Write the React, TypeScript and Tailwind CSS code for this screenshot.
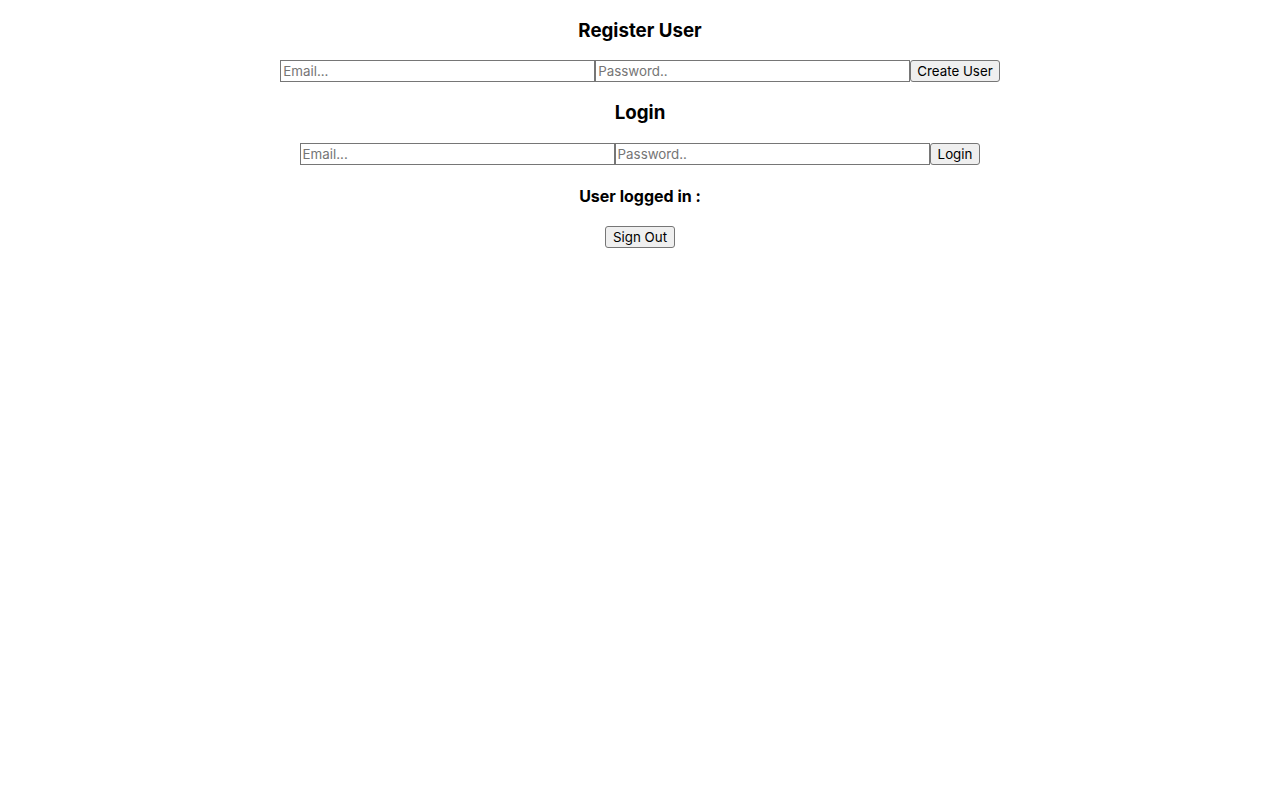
import React from "react";

const inputCls =
  "w-[315px] h-[22px] border border-[#767676] bg-white px-[2px] py-[1px] text-[13.333px] leading-[normal] text-black placeholder:text-[#757575] outline-none";
const btnCls =
  "h-[22px] border border-[#767676] rounded-[3px] bg-[#efefef] py-[1px] text-[13.333px] text-black leading-[normal]";

export default function App() {
  return (
    <div className="min-h-[800px] bg-white text-center text-black leading-[normal] font-['Inter','Noto_Sans',sans-serif]">
      <div className="flow-root">
        <h3 className="my-[18.72px] text-[18.72px] font-bold">Register User</h3>
        <div className="flex justify-center">
          <input className={inputCls} placeholder="Email..." />
          <input className={inputCls} placeholder="Password.." type="password" />
          <button className={`${btnCls} px-[6px]`}>Create User</button>
        </div>
        <h3 className="my-[18.72px] text-[18.72px] font-bold">Login</h3>
        <div className="flex justify-center">
          <input className={inputCls} placeholder="Email..." />
          <input className={inputCls} placeholder="Password.." type="password" />
          <button className={`${btnCls} px-[7px]`}>Login</button>
        </div>
        <h4 className="my-[20.8px] text-[16px] font-bold">User logged in : </h4>
        <div className="flex justify-center">
          <button className={`${btnCls} px-[7px]`}>Sign Out</button>
        </div>
      </div>
    </div>
  );
}
